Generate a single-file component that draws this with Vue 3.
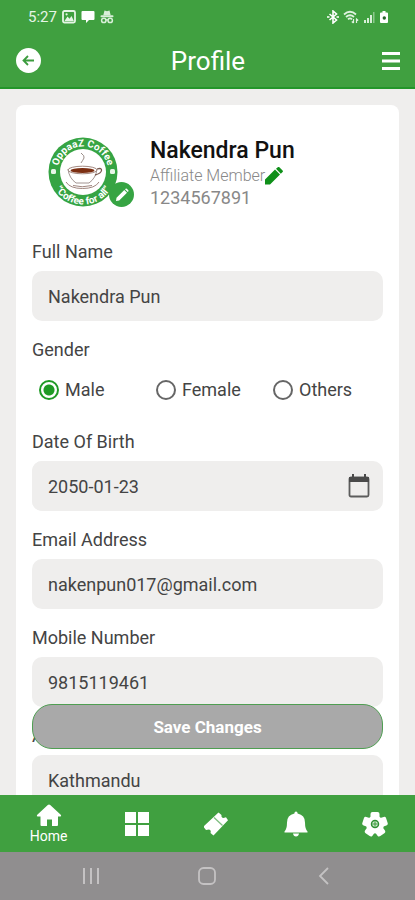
<template>
  <div class="profile-page">
    <header class="top-bar">
      <div class="status-bar">
        <div class="status-group">
          <span class="clock">5:27</span>
          <svg width="14" height="14" viewBox="0 0 14 14" fill="none">
            <rect x="1" y="1" width="12" height="11.5" rx="1.5" stroke="#e6f5e6" stroke-width="1.8" />
            <path d="M2.5 11l3-4.4 2 2.2 2-2.8 2.4 5z" fill="#e6f5e6" />
            <circle cx="4.6" cy="4.3" r="1.1" fill="#e6f5e6" />
          </svg>
          <svg width="14" height="14" viewBox="0 0 14 14" fill="#fff">
            <path d="M1.5 1h11q1 0 1 1v7q0 1-1 1H8l-3 3v-3H1.5q-1 0-1-1V2q0-1 1-1z" />
          </svg>
          <svg width="14" height="14" viewBox="0 0 14 14" fill="#d8efd8">
            <path d="M4.5 .5l2.5.7 2.5-.7 1.2 4.8H3.3z" />
            <rect x="0.5" y="5.3" width="13" height="2" rx="1" />
            <circle cx="3.8" cy="10.4" r="2.2" fill="none" stroke="#d8efd8" stroke-width="1.5" />
            <circle cx="10.2" cy="10.4" r="2.2" fill="none" stroke="#d8efd8" stroke-width="1.5" />
            <path d="M5.5 9.2h3v1.4h-3z" />
          </svg>
        </div>
        <div class="status-group right">
          <svg width="12" height="14" viewBox="0 0 12 14" fill="none" stroke="#fff" stroke-width="1.6">
            <path d="M2.5 4l7 6L6 13V1l3.5 3-7 6" />
            <path d="M0 7h2.5M9.5 7H12" />
          </svg>
          <svg width="16" height="14" viewBox="0 0 16 14" fill="none" stroke="#dff2df" stroke-width="1.8">
            <path d="M1 4.5q6-5.5 12 0M3 7q4-3.5 8 0M5 9.3q2-1.8 4 0" />
            <path d="M10.5 9v4M8.8 11.5l1.7 1.5M13.5 13V9l1.7 1.5" stroke-width="1.2" />
          </svg>
          <svg width="12" height="14" viewBox="0 0 12 14" fill="#d8efd8">
            <path d="M1 10h2v3H1zM4 8h2v5H4zM7 5h2v8H7z" />
            <path d="M10 2h1.5v11H10z" opacity=".5" />
          </svg>
          <svg width="10" height="14" viewBox="0 0 10 14">
            <path d="M3.5 1h3v1.5H8q1 0 1 1V12q0 1-1 1H2q-1 0-1-1V3.500q0-1 1-1h1.500z" fill="#fff" />
            <circle cx="5.3" cy="8" r="1.7" fill="#26662a" />
          </svg>
        </div>
      </div>
      <div class="title-bar">
        <button class="icon-btn" type="button" aria-label="Back">
          <svg width="25" height="25" viewBox="0 0 25 25">
            <circle cx="12.5" cy="12.5" r="12.5" fill="#fff" />
            <path d="M18 12.5H8M12 8l-4.5 4.5L12 17" fill="none" stroke="#3c9c3e" stroke-width="1.8" />
          </svg>
        </button>
        <h1>Profile</h1>
        <button class="icon-btn menu" type="button" aria-label="Menu">
          <svg width="18" height="20" viewBox="0 0 18 20" fill="#fff">
            <path d="M0 1h18v3H0zM0 8.5h18v3H0zM0 16h18v3H0z" />
          </svg>
        </button>
      </div>
    </header>

    <div class="content">
      <main class="scroll-area">
        <form class="card" @submit.prevent>
          <div class="user">
            <div class="avatar">
              <svg width="70" height="70" viewBox="0 0 70 70">
                <defs>
                  <path id="ring-top" d="M9.5 35a25.5 25.5 0 0 1 51 0" />
                  <path id="ring-bottom" d="M2.5 35a32.5 32.5 0 0 0 65 0" />
                </defs>
                <circle cx="35" cy="35" r="34.5" fill="#36a443" />
                <circle cx="35" cy="35" r="23" fill="#fff" />
                <text class="ring-text">
                  <textPath href="#ring-top" startOffset="50%" text-anchor="middle">OppaaZ Coffee</textPath>
                </text>
                <text class="ring-text">
                  <textPath href="#ring-bottom" startOffset="50%" text-anchor="middle">“Coffee for all”</textPath>
                </text>
                <rect x="3" y="32" width="5" height="5" rx="1.5" fill="#e8f6e8" />
                <rect x="62" y="32" width="5" height="5" rx="1.5" fill="#e8f6e8" />
                <path d="M33 16q4 3 3 5t-3 5" fill="none" stroke="#9a8d88" stroke-width="1" />
                <path d="M20 32q1 9 8 14h13q7-5 8-14" fill="#fff" stroke="#8a7a76" stroke-width=".8" />
                <ellipse cx="34.5" cy="33" rx="14.5" ry="3.8" fill="#fff" stroke="#8a6a60" stroke-width=".8" />
                <ellipse cx="34.5" cy="33.5" rx="12" ry="2.6" fill="#7c2f12" />
                <path d="M49 32q5-1.5 4.5 1.500T47 38" fill="none" stroke="#7a5a50" stroke-width="1.3" />
                <path d="M18 45q4 6.5 16.5 6.5T51 45M25 48.5q9 2.5 19 0" fill="none" stroke="#a08680" stroke-width="1" />
              </svg>
              <button class="avatar-edit" type="button" aria-label="Change photo">
                <svg width="16" height="16" viewBox="0 0 16 16" fill="#fff">
                  <path d="M2 14l.5-3.2L10.3 3 13 5.7l-7.800 7.800zM11 2.3l.6-.6q.6-.5 1.2 0l1.5 1.5q.5.6 0 1.2l-.6.6z" />
                </svg>
              </button>
            </div>
            <div class="user-info">
              <h2>{{ form.name }}</h2>
              <div class="role">
                <span>Affiliate Member</span>
                <button class="icon-btn" type="button" aria-label="Edit membership">
                  <svg width="18" height="18" viewBox="0 0 18 18" fill="#0f9019">
                    <path d="M0 17.5V12.500L10 2.500l5 5-10 10zM11 1.800L12.800.3q.8-.7 1.600 0l3.200 3.200q.7.800 0 1.600l-1.800 1.700z" />
                  </svg>
                </button>
              </div>
              <p class="member-id">1234567891</p>
            </div>
          </div>

          <div class="field">
            <label for="name">Full Name</label>
            <input id="name" v-model="form.name" class="text-input" type="text" />
          </div>

          <fieldset class="field">
            <legend>Gender</legend>
            <div class="radios">
              <label v-for="g in genders" :key="g" class="radio">
                <input v-model="form.gender" type="radio" name="gender" :value="g" />
                {{ g }}
              </label>
            </div>
          </fieldset>

          <div class="field">
            <label for="dob">Date Of Birth</label>
            <div class="date-box">
              <input id="dob" v-model="form.dob" class="text-input" type="text" />
              <button class="icon-btn" type="button" aria-label="Pick a date">
                <svg width="22" height="24" viewBox="0 0 22 24">
                  <rect x="1.5" y="3.5" width="19" height="19" rx="1.5" fill="none" stroke="#5c5c5c" stroke-width="1.8" />
                  <path d="M1 3h20v5H1zM4 0h2v4H4zM16 0h2v4h-2z" fill="#4a4a4a" />
                </svg>
              </button>
            </div>
          </div>

          <div class="field">
            <label for="email">Email Address</label>
            <input id="email" v-model="form.email" class="text-input" type="email" />
          </div>

          <div class="field">
            <label for="mobile">Mobile Number</label>
            <input id="mobile" v-model="form.mobile" class="text-input" type="tel" />
          </div>

          <div class="field">
            <label for="address">Address</label>
            <input id="address" v-model="form.address" class="text-input" type="text" />
          </div>
        </form>
      </main>
      <button class="save-btn" type="button">Save Changes</button>
    </div>

    <nav class="tab-bar">
      <a href="#home" class="tab active">
        <svg width="26" height="24" viewBox="0 0 26 24" fill="#fff">
          <path d="M13 1.5q.6 0 1.2.5L25 12q.7 1.500-1 1.500h-2V22q0 1-1 1h-5v-6.500h-5V23H5.500q-1 0-1-1v-8.500H2Q.3 13.500 1 12L11.800 2q.6-.5 1.200-.5z" />
        </svg>
        <span>Home</span>
      </a>
      <a href="#categories" class="tab" aria-label="Categories">
        <svg width="24" height="24" viewBox="0 0 24 24" fill="#fff">
          <path d="M0 0h11v11H0zM13 0h11v11H13zM0 13h11v11H0zM13 13h11v11H13z" />
        </svg>
      </a>
      <a href="#coupons" class="tab" aria-label="Coupons">
        <svg width="26" height="26" viewBox="0 0 26 26">
          <path d="M1 15L15.500 1.500l3 2.500q-.5 2.500 2 3l2.500-.8 2 3L10.500 24.500l-3-2.500q1-3-1.500-3.500l-3 .5-2-2.500z" fill="#fff" />
          <path d="M11 6.500l8.500 8" stroke="#7dbd7e" stroke-width="1.2" />
        </svg>
      </a>
      <a href="#notifications" class="tab" aria-label="Notifications">
        <svg width="24" height="26" viewBox="0 0 24 26" fill="#fff">
          <path d="M12 .5q1.600 0 1.600 2 7.400 1.500 7.400 9 0 6.500 2.500 9v1H.5v-1q2.500-2.500 2.500-9 0-7.500 7.400-9 0-2 1.600-2zM9 22.500h6q-.5 3-3 3t-3-3z" />
        </svg>
      </a>
      <a href="#settings" class="tab" aria-label="Settings">
        <svg width="26" height="26" viewBox="0 0 26 26">
          <g fill="#fff">
            <circle cx="13" cy="13.5" r="9" />
            <rect v-for="n in 5" :key="n" x="8.5" y="1" width="9" height="10" rx="2" :transform="`rotate(${n * 72} 13 13.5)`" />
          </g>
          <circle cx="13" cy="13" r="3.5" fill="#cfe8cf" stroke="#2f8f33" stroke-width="1.5" />
          <path d="M13 10.500v5M10.500 13h5" stroke="#3c9c3e" stroke-width="1" />
        </svg>
      </a>
    </nav>

    <div class="system-bar">
      <button class="sys-btn" type="button" aria-label="Recent apps">
        <svg width="18" height="18" viewBox="0 0 18 18" stroke="#c4c2c3" stroke-width="2">
          <path d="M2 1v16M9 1v16M16 1v16" />
        </svg>
      </button>
      <button class="sys-btn" type="button" aria-label="Home screen">
        <svg width="18" height="18" viewBox="0 0 18 18" fill="none" stroke="#c4c2c3" stroke-width="1.8">
          <rect x="1" y="1" width="16" height="16" rx="4.5" />
        </svg>
      </button>
      <button class="sys-btn" type="button" aria-label="Go back">
        <svg width="18" height="18" viewBox="0 0 18 18" fill="none" stroke="#c4c2c3" stroke-width="1.8">
          <path d="M13 1L5 9l8 8" />
        </svg>
      </button>
    </div>
  </div>
</template>

<script setup>
import { reactive } from 'vue';

const genders = ['Male', 'Female', 'Others'];

const form = reactive({
  name: 'Nakendra Pun',
  gender: 'Male',
  dob: '2050-01-23',
  email: 'nakenpun017@gmail.com',
  mobile: '9815119461',
  address: 'Kathmandu'
});
</script>

<style>
body {
  margin: 0;
}
</style>

<style scoped>
.profile-page {
  display: flex;
  flex-direction: column;
  height: 100vh;
  overflow: hidden;
  background: #efeeed;
  color: #444;
  font-family: Roboto, "Liberation Sans", sans-serif;
  font-size: 18px;
  line-height: 20px;
}

button,
input {
  font: inherit;
  color: inherit;
}

svg {
  display: block;
}

.icon-btn,
.sys-btn {
  padding: 0;
  border: 0;
  background: none;
}

/* header */
.top-bar {
  flex: none;
  background: #40a040;
  border-bottom: 2px solid #23962a;
  color: #fff;
}

.status-bar {
  display: flex;
  justify-content: space-between;
  height: 34px;
  padding: 0 26px 0 28px;
}

.status-group {
  display: flex;
  align-items: center;
  gap: 5px;
}

.status-group.right {
  gap: 4px;
}

.clock {
  font-size: 15px;
  color: #e6f5e6;
}

.title-bar {
  display: grid;
  grid-template-columns: 1fr auto 1fr;
  align-items: center;
  height: 53px;
  padding: 0 15px 0 16px;
}

.icon-btn {
  justify-self: start;
}

.menu {
  justify-self: end;
}

h1 {
  margin: 0;
  font-size: 26px;
  line-height: 32px;
  font-weight: 400;
}

.content {
  position: relative;
  flex: 1;
  min-height: 0;
}

.scroll-area {
  box-sizing: border-box;
  height: 100%;
  padding: 16px;
  overflow: hidden;
}

.card {
  padding: 32px 16px 16px;
  background: #fff;
  border-radius: 8px;
}

.user {
  display: flex;
  gap: 30px;
  padding-left: 16px;
  margin-bottom: 33px;
}

.avatar {
  position: relative;
  width: 72px;
  height: 72px;
}

.ring-text {
  fill: #fff;
  font-size: 10px;
  font-weight: 700;
}

.avatar-edit {
  position: absolute;
  right: -14px;
  bottom: 2px;
  display: flex;
  align-items: center;
  justify-content: center;
  width: 25px;
  height: 25px;
  padding: 0;
  border: 0;
  border-radius: 50%;
  background: #36a443;
}

.user-info {
  color: #888;
}

h2 {
  margin: 0;
  font-size: 23px;
  line-height: 28px;
  font-weight: 500;
  color: #111;
}

.role {
  display: flex;
  align-items: center;
  height: 22px;
  font-size: 16px;
  font-weight: 300;
}

.member-id {
  margin: 0;
  line-height: 22px;
}

.field {
  display: flex;
  flex-direction: column;
  gap: 9px;
  margin: 0 0 19px;
  padding: 0;
  border: 0;
}

legend {
  padding: 0;
  margin-bottom: 9px;
}

.text-input {
  box-sizing: border-box;
  width: 100%;
  height: 50px;
  padding: 0 16px;
  border: 0;
  border-radius: 10px;
  outline: none;
  background: #efeeed;
}

.radios {
  display: grid;
  grid-template-columns: repeat(3, 1fr);
  height: 44px;
}

.radio {
  display: flex;
  align-items: center;
  gap: 6px;
  height: 42px;
  padding-left: 7px;
}

.radio input {
  appearance: none;
  box-sizing: border-box;
  width: 20px;
  height: 20px;
  margin: 0;
  border: 2px solid #666;
  border-radius: 50%;
}

.radio input:checked {
  border-color: #1f9a25;
  background: radial-gradient(circle, #1f9a25 5px, transparent 6px);
}

.date-box {
  display: flex;
  align-items: center;
  padding-right: 13px;
  border-radius: 10px;
  background: #efeeed;
}

.save-btn {
  position: absolute;
  right: 32px;
  bottom: 46px;
  left: 32px;
  height: 45px;
  border: 1px solid #4f9e52;
  border-radius: 20px;
  background: #a9a9a9;
  color: #fff;
  font-size: 17px;
  font-weight: 700;
}

/* bottom bars */
.tab-bar {
  flex: none;
  display: flex;
  height: 57px;
  background: #40a040;
}

.tab {
  display: flex;
  flex: 1;
  flex-direction: column;
  align-items: center;
  justify-content: center;
  color: #fff;
  font-size: 14px;
  line-height: 18px;
  text-decoration: none;
}

.tab.active {
  flex: none;
  width: 97px;
}

.system-bar {
  flex: none;
  display: grid;
  grid-template-columns: repeat(3, 1fr);
  height: 48px;
  padding: 0 33px;
  background: #908e8f;
}

.sys-btn {
  display: flex;
  align-items: center;
  justify-content: center;
}
</style>
